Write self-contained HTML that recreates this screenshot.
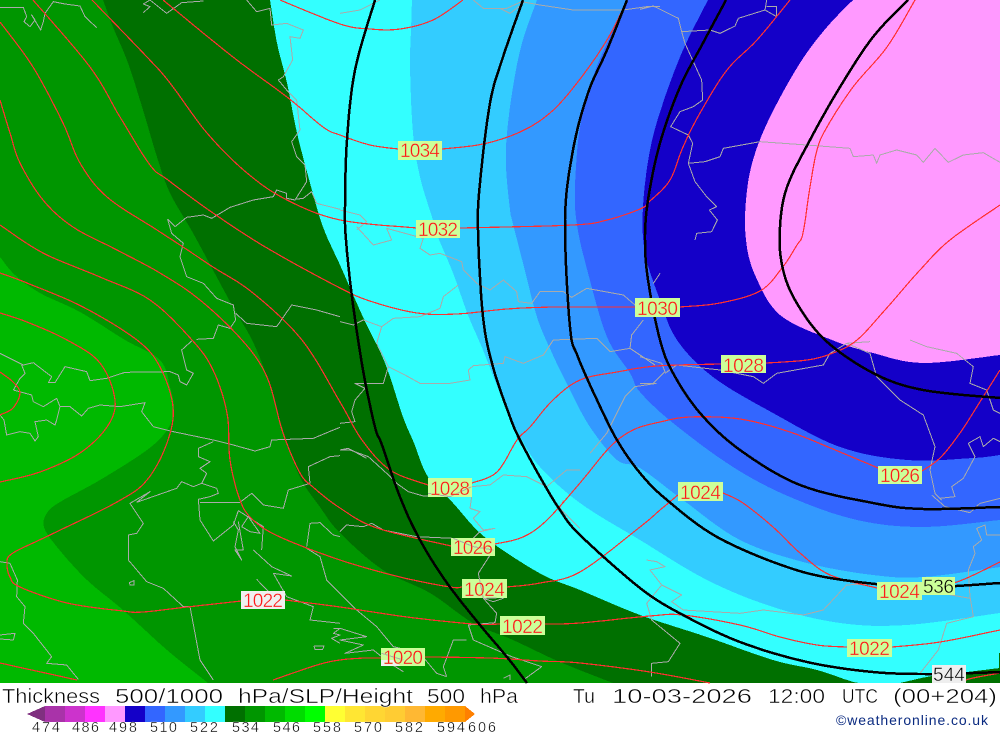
<!DOCTYPE html>
<html><head><meta charset="utf-8"><title>Thickness 500/1000 hPa</title>
<style>
html,body{margin:0;padding:0;background:#fff;width:1000px;height:733px;overflow:hidden}
svg{display:block}
polyline,path.v{vector-effect:non-scaling-stroke;fill:none;stroke-linejoin:round}
.g polyline,.g path{stroke:#aaa;stroke-width:1;fill:none;vector-effect:non-scaling-stroke}
.r polyline{stroke:#ff3030;stroke-width:1.2}
.k polyline{stroke:#000;stroke-width:2.5}
text{font-family:"Liberation Sans",sans-serif}
.l{font-size:19px;fill:#ff1818;stroke:#ccff99;stroke-width:.35px}
.w{font-size:19px;fill:#ff1818;stroke:#f0f0f0;stroke-width:.35px}
.b{font-size:19px;fill:#000;stroke:#ccff99;stroke-width:.45px}
.t{font-size:20px;fill:#000;stroke:#fff;stroke-width:.5px}
.n{font-size:14.5px;fill:#000;stroke:#fff;stroke-width:.35px}
</style></head><body>
<svg width="1000" height="733" viewBox="0 0 1000 733" xmlns="http://www.w3.org/2000/svg">
<rect width="1000" height="733" fill="#fff"/>
<g shape-rendering="crispEdges">
<rect width="1000" height="683" fill="#007000"/>
<g class="s">
<polygon fill="#009600" points="0,0 103,0 113,27 128,63 143,110 157,157 170,193 193,233 213,270 233,307 252,340 267,377 283,430 300,477 320,507 340,533 383,570 430,593 473,623 513,640 560,662 613,683 0,683"/>
<polygon fill="#00b900" points="0,257 15,275 40,293 80,312 125,340 160,360 170,387 174,410 167,430 147,450 100,480 60,502 47,513 44,527 57,547 87,580 123,610 167,650 208,683 0,683"/>
<polygon fill="#33ffff" points="270,0 277,43 287,83 297,133 310,183 323,227 340,265 363,317 385,363 403,417 414,443 428,477 453,503 480,533 513,557 547,577 580,590 640,615 707,637 773,660 817,670 850,681 860,683 900,683 932,676 967,672 1000,668 1000,0"/>
<polygon fill="#33ccff" points="412,0 411,30 410,67 413,133 420,177 432,217 438,237 453,273 468,315 483,350 500,393 520,436 540,467 580,503 640,540 707,580 773,607 840,623 907,625 1000,613 1000,0"/>
<polygon fill="#3399ff" points="537,0 522,43 513,87 507,133 506,167 510,210 512,220 523,263 537,317 552,353 570,390 590,427 617,460 640,468 683,500 740,540 807,563 873,575 923,577 1000,567 1000,0"/>
<polygon fill="#3366ff" points="627,0 607,43 593,77 580,127 575,187 577,225 588,273 607,337 630,373 640,392 673,423 733,467 790,497 857,520 923,527 1000,520 1000,0"/>
<polygon fill="#1400c8" points="708,0 683,50 663,103 650,150 643,207 645,253 660,300 677,340 713,377 773,413 840,447 907,460 973,458 1000,455 1000,0"/>
<polygon fill="#ff99ff" points="853,0 827,27 800,63 770,117 753,160 746,200 746,240 755,275 780,315 832,340 873,353 923,363 1000,355 1000,0"/>
</g>
<rect x="999" y="653" width="1" height="15" fill="#007000"/>

<g class="g">
<g transform="scale(.33333)">
<polyline points="0,22 70,22 80,50 72,65 90,80 105,60 95,45 122,90 130,65 135,40 160,5 195,12 240,18 255,50 290,83"/>
<polyline points="430,38 450,20 430,12 450,0 500,40 545,8 610,3"/>
<polyline points="740,0 770,35 810,25 815,75 860,70 910,90 900,115 870,110 878,180 850,230 835,240 860,270 890,300 900,390 875,425 890,470 915,495 920,545 885,600 860,595 860,580 830,570 820,590 760,600 690,622 635,655 610,645 560,652 525,680 503,658 515,700 550,730 540,770 560,830 610,850 650,895 700,915 707,960 690,985 655,975 640,1015 590,1018"/>
<polyline points="885,598 910,595 935,575 950,610 1020,628"/>
<polyline points="707,940 740,970 830,980 875,915 950,930 1020,950"/>
</g>
<g transform="translate(0,340) scale(.33333)">
<polyline points="0,40 70,75 100,68 155,110 145,128 165,128 195,80 260,95 270,122 320,115 375,97 510,95 535,105 540,125 560,135 580,100 560,90 545,30 575,3"/>
<polyline points="40,150 95,165 100,185 130,200 170,175 180,200 170,240 165,255 140,240 105,245 115,290 105,303 90,280 60,275 20,285 12,240 0,225"/>
<polyline points="40,150 60,115 75,100 65,75"/>
<polyline points="180,200 210,200 245,228 265,205 300,195 360,200 435,188 425,215 460,260 520,275 640,300 700,315 765,333 810,320 815,300 940,295 1000,270 1020,262"/>
<polyline points="640,305 595,325 595,350 630,365 600,385 620,400 605,430 650,445 655,460 630,470 595,478 600,540 640,603 700,555 715,512 790,560 785,630"/>
<polyline points="600,487 720,487 755,460 790,495 850,505 865,450 930,430 925,380 990,350 1020,347"/>
<polyline points="410,487 450,455 390,490 430,550 410,580 385,585 385,660 440,725 490,745 550,800 570,800 600,960 640,1020"/>
<polyline points="410,487 530,445 545,425 580,440 605,430"/>
<polyline points="700,545 715,570 705,620 725,660 705,630 730,630 715,545"/>
<polyline points="725,560 745,530 780,580 750,575 725,560"/>
<polyline points="760,630 815,680 875,708 820,700 860,770 940,800 930,840 1020,850"/>
<polyline points="770,718 820,770 850,775"/>
<polyline points="0,665 30,670 52,720 50,770 75,800 70,850 100,880 155,950 140,970 200,975 235,1018"/>
<polyline points="0,885 45,880 40,900 0,897"/>
<polyline points="388,728 402,722 402,735 390,735 388,728"/>
<polyline points="942,918 972,918 968,928 945,928 942,918"/>
<polyline points="920,620 930,550 960,548 1000,585 1020,590"/>
<polyline points="920,625 960,650 980,720 1020,760"/>
<polyline points="1000,865 1020,865 1000,880 1020,885 995,895 1020,910"/>
</g>
<g transform="translate(340,440) scale(.33333)">
<polyline points="0,30 30,30 85,50 140,100 170,130 205,155 250,168 330,170 395,140 450,135 490,105 560,110 620,140 680,90 720,90"/>
<polyline points="395,170 390,205 420,215 400,235 430,270 465,265 420,275 395,300"/>
<polyline points="0,275 20,255 70,260 95,250 130,270 230,290 340,295 460,330 415,400 430,475 470,520 465,548 385,555 400,600 515,650 605,680 550,720"/>
<polyline points="430,475 460,485 490,475"/>
<polyline points="0,460 50,510 110,560 160,620 240,640 290,700 320,710"/>
<polyline points="380,600 340,600 310,680 320,710"/>
<polyline points="0,565 80,590 0,600 70,615 15,640 100,630 150,670 190,695"/>
<polyline points="490,715 510,705 510,720"/>
<polyline points="670,180 660,205 720,265"/>
</g>
<g transform="translate(340,220) scale(.33333)">
<polyline points="50,20 100,75 155,60 140,25 250,55 240,85 270,105 300,100 365,125 370,150 410,190 450,210 490,180 530,215 535,245 575,250 600,215 670,215 695,232 740,205 850,225 885,255"/>
<polyline points="355,195 310,230 300,265 240,290 160,295 125,320"/>
<polyline points="0,305 40,315 70,300 125,320 110,370 145,440 195,465 240,490 330,490 390,480 385,450 400,437 490,430 495,410 550,430 610,405 640,360 770,355 810,395 870,385 900,405 945,435"/>
<polyline points="870,385 875,345 910,300"/>
<polyline points="145,440 130,490 80,490 45,490 75,505 45,540 35,575 45,605 0,610"/>
<polyline points="0,690 25,685 80,715"/>
<polyline points="940,190 960,160"/>
<polyline points="750,700 800,640 830,580 855,530 885,500 950,490"/>
</g>
<g transform="scale(.33333) translate(1020,0)">
<polyline points="0,40 60,30 120,0"/>
<polyline points="400,0 430,25 500,25 545,5 600,15 700,30 850,30 920,20 960,20"/>
<polyline points="480,25 510,40 550,10"/>
<polyline points="0,630 60,645 80,665 50,690"/>
</g>
<g transform="translate(640,0) scale(.33333)">
<polyline points="0,28 40,18 115,55 125,95 135,130 185,240 188,300 160,320 120,335 92,380 145,405 158,430 145,490 165,545 200,590 230,620 208,630 232,660 215,695 170,700 165,720"/>
<polyline points="125,95 210,90 240,100 285,78 295,55 375,30 380,0"/>
<polyline points="375,30 410,50 410,20 380,20"/>
<polyline points="145,490 195,485 240,470 250,445 360,425 430,430 500,435 630,445 640,470 700,465 710,490 720,465 770,450 830,465 850,487 885,445 925,487 970,465 1030,458 1080,487"/>
</g>
<g transform="translate(640,340) scale(.33333)">
<polyline points="0,130 40,130 75,95 65,70 0,50"/>
<polyline points="75,100 110,75 240,90 340,110 370,130 410,100 550,75 570,40 620,10 690,5"/>
<polyline points="620,10 690,40 710,110 780,180 850,225 885,320 870,390 885,460 905,480"/>
<polyline points="875,465 915,500 990,518 1020,490 1080,475"/>
<polyline points="810,0 860,20 950,40 1000,80 990,130 1040,150 1060,210 1080,220"/>
<polyline points="900,475 945,470 935,440 970,415 1005,350 985,310 1020,290 1030,320 1060,295 1080,305"/>
<polyline points="1080,585 1040,585 1035,555 1010,565 1025,600 1000,620 1005,640 985,690 990,770 1000,830 920,850 895,930 840,1000"/>
<polyline points="20,660 50,665 75,680 30,690 65,735 125,765 95,785 130,810 300,820 370,810 490,825 550,810 620,735 710,730 850,750 990,775"/>
<polyline points="65,735 20,790 35,840 120,910 85,965 35,970 35,1010"/>
</g>
</g>

<g class="r s">
<polyline points="280,0 340,24 370,29 400,29 433,20 463,0"/>
<polyline points="163,0 233,57 287,97 323,127 340,135 370,145 398,149"/>
<polyline points="442,149 483,144 520,132 550,113 577,83 607,40 627,0"/>
<polyline points="92,0 147,57 170,83 207,133 247,173 287,200 340,220 417,228"/>
<polyline points="460,228 573,225 607,220 640,209 650,201 670,180 683,147 700,113 727,70 757,40 790,0"/>
<polyline points="33,0 90,67 120,117 150,165 168,180 213,213 267,248 340,288 373,302 417,313 457,314 507,309 557,307 635,307"/>
<polyline points="680,307 720,303 760,291 782,268 797,245 803,233 810,187 817,150 827,127 853,87 887,47 915,0"/>
<polyline points="0,22 33,67 63,123 80,163 107,197 157,230 183,247 213,267 253,293 302,340 340,402 362,440 390,470 428,485"/>
<polyline points="472,483 497,472 517,440 530,427 553,400 580,380 617,372 657,366 721,364"/>
<polyline points="766,363 807,360 833,353 857,340 885,310 920,270 950,240 1000,205"/>
<polyline points="0,100 10,133 20,163 43,200 73,227 117,250 160,273 200,300 242,340 267,377 283,433 300,473 313,487 340,508 377,528 451,546"/>
<polyline points="495,544 523,537 547,520 580,483 610,447 633,430 660,422 690,417 740,419 790,432 840,452 878,468"/>
<polyline points="922,471 940,458 960,433 983,397 1000,370"/>
<polyline points="0,225 43,253 100,277 150,300 192,340 213,370 227,413 230,460 240,500 253,520 280,537 340,560 400,577 450,587 462,587"/>
<polyline points="507,587 540,583 580,572 640,527 660,510 678,495"/>
<polyline points="723,493 743,503 773,527 800,553 830,575 877,588"/>
<polyline points="923,588 957,582 1000,562"/>
<polyline points="0,273 27,283 83,307 137,340 160,367 173,407 167,443 147,480 117,502 50,535 13,553 7,563 10,577 20,587 67,603 123,611 143,612 187,607 241,601"/>
<polyline points="285,600 340,607 407,617 473,624 500,624"/>
<polyline points="545,624 580,623 650,616 683,615 740,625 780,637 817,645 847,647"/>
<polyline points="892,647 940,642 1000,630"/>
<polyline points="0,313 27,322 67,340 100,363 115,400 107,427 80,453 40,472 0,482"/>
<polyline points="0,372 13,382 20,393 13,408 0,415"/>
<polyline points="0,663 77,680"/>
<polyline points="273,680 317,665 340,660 365,658 381,658"/>
<polyline points="425,657 490,658 540,661 580,663 650,672 710,683"/>
<polyline points="966,680 973,678 1000,673"/>
</g>

<g class="k s">
<polyline points="375,0 355,70 347,140 345,207 346,240 352,297 363,370 375,427 382,445 400,497 420,540 447,583 480,625 507,657 527,683"/>
<polyline points="523,0 503,57 490,103 480,183 478,230 483,317 493,367 510,417 520,440 540,477 560,510 580,535 640,588 683,615 740,642 807,662 873,672 933,674 1000,672"/>
<polyline points="627,0 607,50 588,93 573,150 565,220 570,327 578,357 597,400 617,440 640,473 667,500 717,537 787,567 843,580 922,587 1000,583"/>
<polyline points="726,0 703,43 680,87 660,143 648,200 645,240 648,280 660,340 673,373 700,413 740,450 800,485 873,503 923,509 1000,507"/>
<polyline points="908,0 873,37 840,87 810,140 787,187 780,227 782,265 795,300 825,340 873,373 923,390 1000,398"/>
</g>

<g fill="#ccff99">
<rect x="398" y="141" width="44" height="19"/>
<rect x="416" y="220" width="44" height="18"/>
<rect x="635" y="298" width="45" height="19"/>
<rect x="721" y="355" width="45" height="18"/>
<rect x="878" y="466" width="44" height="18"/>
<rect x="678" y="482" width="45" height="19"/>
<rect x="877" y="582" width="45" height="18"/>
<rect x="922" y="577" width="33" height="18"/>
<rect x="847" y="639" width="45" height="18"/>
<rect x="428" y="478" width="44" height="19"/>
<rect x="451" y="538" width="44" height="18"/>
<rect x="462" y="579" width="45" height="19"/>
<rect x="500" y="616" width="45" height="19"/>
<rect x="381" y="648" width="44" height="18"/>
<rect x="241" y="591" width="44" height="18" fill="#f0f0f0"/>
<rect x="932" y="665" width="34" height="18" fill="#eeeeee"/>
<polygon points="381,660 395,660 400,666 381,666" fill="#f0f0f0"/>
</g>
<g class="g" transform="translate(340,440) scale(.33333)">
<polyline points="264,160 330,170 395,140"/>
<polyline points="340,295 400,320 460,330"/>
<polyline points="125,640 190,660"/>
<polyline points="415,400 430,475 470,474"/>
</g>
</g>

<text class="l" x="400" y="157" textLength="40">1034</text>
<text class="l" x="418" y="236" textLength="40">1032</text>
<text class="l" x="637" y="315" textLength="41">1030</text>
<text class="l" x="723" y="372" textLength="41">1028</text>
<text class="l" x="880" y="482" textLength="40">1026</text>
<text class="l" x="680" y="499" textLength="41">1024</text>
<text class="l" x="879" y="598" textLength="41">1024</text>
<text class="b" x="923" y="593" textLength="31">536</text>
<text class="l" x="849" y="655" textLength="41">1022</text>
<text class="l" x="430" y="495" textLength="40">1028</text>
<text class="l" x="453" y="554" textLength="40">1026</text>
<text class="l" x="464" y="596" textLength="41">1024</text>
<text class="l" x="502" y="633" textLength="41">1022</text>
<text class="l" x="383" y="664" textLength="40">1020</text>
<text class="w" x="243" y="607" textLength="40">1022</text>
<text class="b" x="933" y="681" textLength="32" style="stroke:#eeeeee">544</text>

<g shape-rendering="crispEdges">
<polygon points="27,714 45,706 45,722" fill="#803080"/>
<rect x="45" y="706" width="20" height="16" fill="#a933a9"/>
<rect x="65" y="706" width="20" height="16" fill="#cc33cc"/>
<rect x="85" y="706" width="20" height="16" fill="#ff33ff"/>
<rect x="105" y="706" width="20" height="16" fill="#ff99ff"/>
<rect x="125" y="706" width="20" height="16" fill="#1400c8"/>
<rect x="145" y="706" width="20" height="16" fill="#3366ff"/>
<rect x="165" y="706" width="20" height="16" fill="#3399ff"/>
<rect x="185" y="706" width="20" height="16" fill="#33ccff"/>
<rect x="205" y="706" width="20" height="16" fill="#33ffff"/>
<rect x="225" y="706" width="20" height="16" fill="#007000"/>
<rect x="245" y="706" width="20" height="16" fill="#009600"/>
<rect x="265" y="706" width="20" height="16" fill="#00b900"/>
<rect x="285" y="706" width="20" height="16" fill="#00dc00"/>
<rect x="305" y="706" width="20" height="16" fill="#00ff00"/>
<rect x="325" y="706" width="20" height="16" fill="#ffff33"/>
<rect x="345" y="706" width="20" height="16" fill="#ffe633"/>
<rect x="365" y="706" width="20" height="16" fill="#ffd633"/>
<rect x="385" y="706" width="20" height="16" fill="#ffcc33"/>
<rect x="405" y="706" width="20" height="16" fill="#ffb833"/>
<rect x="425" y="706" width="20" height="16" fill="#ffaa00"/>
<rect x="445" y="706" width="20" height="16" fill="#ff9900"/>
<polygon points="465,706 475,714 465,722" fill="#ff8000"/>
</g>

<g lengthAdjust="spacingAndGlyphs">
<text class="t" x="2" y="703" textLength="98" lengthAdjust="spacingAndGlyphs">Thickness</text>
<text class="t" x="115" y="703" textLength="108" lengthAdjust="spacingAndGlyphs">500/1000</text>
<text class="t" x="238" y="703" textLength="175" lengthAdjust="spacingAndGlyphs">hPa/SLP/Height</text>
<text class="t" x="427" y="703" textLength="38" lengthAdjust="spacingAndGlyphs">500</text>
<text class="t" x="480" y="703" textLength="38" lengthAdjust="spacingAndGlyphs">hPa</text>
<text class="t" x="573" y="703" textLength="22" lengthAdjust="spacingAndGlyphs">Tu</text>
<text class="t" x="612" y="703" textLength="140" lengthAdjust="spacingAndGlyphs">10-03-2026</text>
<text class="t" x="768" y="703" textLength="57" lengthAdjust="spacingAndGlyphs">12:00</text>
<text class="t" x="842" y="703" textLength="36" lengthAdjust="spacingAndGlyphs">UTC</text>
<text class="t" x="893" y="703" textLength="104" lengthAdjust="spacingAndGlyphs">(00+204)</text>
</g>

<text class="n" x="32" y="732" textLength="28">474</text>
<text class="n" x="72" y="732" textLength="27">486</text>
<text class="n" x="109" y="732" textLength="28">498</text>
<text class="n" x="150" y="732" textLength="27">510</text>
<text class="n" x="190" y="732" textLength="28">522</text>
<text class="n" x="232" y="732" textLength="27">534</text>
<text class="n" x="273" y="732" textLength="27">546</text>
<text class="n" x="313" y="732" textLength="28">558</text>
<text class="n" x="354" y="732" textLength="28">570</text>
<text class="n" x="395" y="732" textLength="28">582</text>
<text class="n" x="437" y="732" textLength="28">594</text>
<text class="n" x="468" y="732" textLength="28">606</text>

<text x="836" y="725" font-size="14" fill="#0a2a80" textLength="152" lengthAdjust="spacing">©weatheronline.co.uk</text>
</svg>
<script>
(function(){
function edge(p){return p[0]<=0||p[0]>=1000||p[1]<=0||p[1]>=683;}
document.querySelectorAll('.s polyline,.s polygon').forEach(function(el){
  var pts=el.getAttribute('points').trim().split(/\s+/).map(function(s){return s.split(',').map(Number);});
  var closed=el.tagName.toLowerCase()==='polygon',n=pts.length,out=[];
  var last=closed?n:n-1;
  for(var i=0;i<last;i++){
    var a=pts[i],b=pts[(i+1)%n];
    out.push(a);
    if(edge(a)&&edge(b))continue;
    var p0=(edge(a)||(!closed&&i===0))?a:pts[(i-1+n)%n];
    var p3=(edge(b)||(!closed&&i+2>=n))?b:pts[(i+2)%n];
    for(var k=1;k<8;k++){
      var t=k/8,t2=t*t,t3=t2*t,q=[0,1].map(function(j){
        return .5*(2*a[j]+(b[j]-p0[j])*t+(2*p0[j]-5*a[j]+4*b[j]-p3[j])*t2+(3*a[j]-p0[j]-3*b[j]+p3[j])*t3);
      });
      out.push(q);
    }
  }
  if(!closed)out.push(pts[n-1]);
  else if(last<n)out.push(pts[n-1]);
  el.setAttribute('points',out.map(function(p){return p[0].toFixed(1)+','+p[1].toFixed(1);}).join(' '));
});
})();
</script>
</body></html>
